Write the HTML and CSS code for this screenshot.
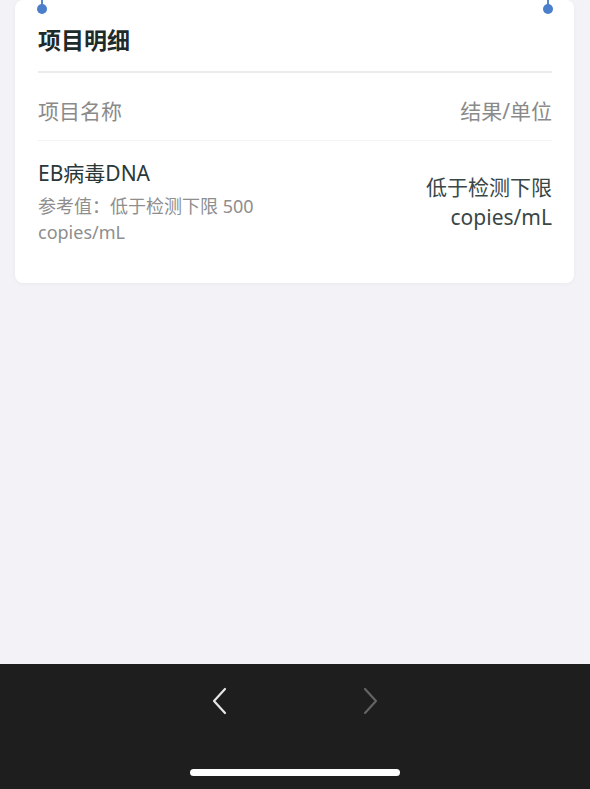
FILE: index.html
```html
<!DOCTYPE html>
<html lang="zh-CN">
  <head>
    <meta charset="UTF-8" />
    <meta name="viewport" content="width=device-width, initial-scale=1.0" />
    <title>项目明细</title>
    <link rel="stylesheet" href="styles.css">
  </head>
  <body>
    <div class="page">
      <main class="content">
        <section class="card">
          <span class="pin pin-left"></span>
          <span class="pin pin-right"></span>
          <h2 class="card-title">项目明细</h2>
          <div class="row row-head">
            <div class="col">项目名称</div>
            <div class="col col-right">结果/单位</div>
          </div>
          <div class="row row-item">
            <div class="col">
              <div class="item-name">EB病毒DNA</div>
              <div class="item-ref">参考值：低于检测下限 500 copies/mL</div>
            </div>
            <div class="col col-right item-value">
              <div>低于检测下限</div>
              <div>copies/mL</div>
            </div>
          </div>
        </section>
      </main>
      <nav class="toolbar">
        <div class="nav-buttons">
          <button class="nav-btn" aria-label="后退">
            <svg width="16" height="28" viewBox="0 0 16 28">
              <path d="M13 2 L2 14 L13 26" fill="none" stroke="#e6e6e6" stroke-width="2.2" stroke-linecap="round" stroke-linejoin="round" />
            </svg>
          </button>
          <button class="nav-btn" aria-label="前进" disabled>
            <svg width="16" height="28" viewBox="0 0 16 28">
              <path d="M3 2 L14 14 L3 26" fill="none" stroke="#646464" stroke-width="2.2" stroke-linecap="round" stroke-linejoin="round" />
            </svg>
          </button>
        </div>
        <div class="home-bar"></div>
      </nav>
    </div>
  </body>
</html>
```

FILE: styles.css
```css
body {
  margin: 0;
  padding: 0;
  font-family: "Noto Sans", "Noto Sans CJK SC", sans-serif;
  background-color: #f2f2f7;
}
.page {
  height: 789px;
  display: flex;
  flex-direction: column;
}
.content {
  flex: 1;
  padding: 0 16px 0 15px;
}
.card {
  position: relative;
  background: #fff;
  border-radius: 8px;
  padding: 0 22px 0 23px;
  box-shadow: 0 1px 4px rgba(0, 0, 0, 0.04);
}
.pin {
  position: absolute;
  top: 0;
  width: 10px;
  height: 14px;
}
.pin::before {
  content: "";
  position: absolute;
  left: 4px;
  top: 0;
  width: 2px;
  height: 6px;
  background: #5b86c8;
}
.pin::after {
  content: "";
  position: absolute;
  left: 0;
  top: 4px;
  width: 10px;
  height: 10px;
  border-radius: 50%;
  background: #4b7ecb;
}
.pin-left {
  left: 22px;
}
.pin-right {
  right: 21px;
}
.card-title {
  margin: 0;
  padding: 26px 0 17px;
  font-size: 23px;
  line-height: 28px;
  font-weight: bold;
  color: #1d2b2b;
  border-bottom: 2px solid #ececec;
}
.row {
  display: flex;
  align-items: center;
}
.col {
  flex: 1;
  min-width: 0;
}
.col-right {
  text-align: right;
}
.row-head {
  padding: 24px 0 15px;
  font-size: 21px;
  line-height: 28px;
  color: #8a8a8a;
  border-bottom: 1px solid #f3f3f3;
}
.row-item {
  padding: 18px 0 38px;
}
.item-name {
  font-size: 21px;
  line-height: 28px;
  color: #2a3838;
  margin-bottom: 6px;
}
.item-ref {
  font-size: 18px;
  line-height: 26px;
  color: #8e8e8e;
  padding-right: 10px;
}
.item-value {
  font-size: 21px;
  line-height: 30px;
  color: #3a4747;
}
.toolbar {
  height: 125px;
  background-color: #1e1e1e;
  display: flex;
  flex-direction: column;
  align-items: center;
}
.nav-buttons {
  display: flex;
  gap: 134px;
  padding-top: 23px;
}
.nav-btn {
  border: none;
  background: none;
  padding: 0;
  width: 16px;
  height: 28px;
  cursor: pointer;
}
.home-bar {
  margin-top: 54px;
  width: 210px;
  height: 7px;
  border-radius: 4px;
  background: #fff;
}
```
